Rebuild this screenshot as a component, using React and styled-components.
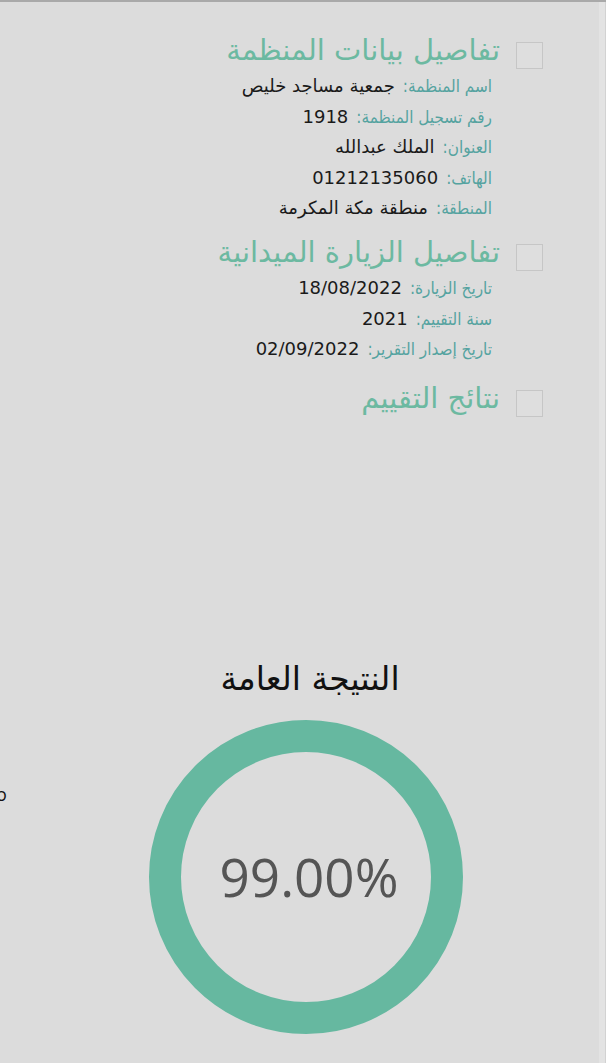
import React from 'react';
import styled, { createGlobalStyle } from 'styled-components';

const GlobalStyle = createGlobalStyle`
  html, body {
    margin: 0;
    padding: 0;
    background: #dcdcdc;
  }
  body {
    font-family: "DejaVu Sans", sans-serif;
  }
`;

const Page = styled.div`
  display: flex;
  width: 606px;
  height: 1063px;
  border-top: 2px solid #a9a9a9;
  box-sizing: border-box;
  overflow: hidden;
  position: relative;
`;

const Main = styled.div`
  flex: 1;
  direction: rtl;
  display: flex;
  flex-direction: column;
`;

const Rail = styled.div`
  width: 6px;
  background: #e3e3e3;
  border-right: 1px solid #d2d2d2;
`;

const Sections = styled.div`
  display: flex;
  flex-direction: column;
  padding: 26px 56px 0 0;
`;

const Section = styled.div`
  display: flex;
  align-items: flex-start;
  gap: 16px;
  margin-top: ${p => (p.$first ? 0 : p.$spaced ? '7px' : '2px')};
`;

const Check = styled.div`
  width: 25px;
  height: 25px;
  margin-top: 14px;
  border: 1px solid #c6c6c6;
  background: #dedede;
  flex-shrink: 0;
`;

const Body = styled.div`
  display: flex;
  flex-direction: column;
`;

const Heading = styled.h2`
  margin: 0;
  font-family: "DejaVu Sans", sans-serif;
  font-weight: 400;
  font-size: 29px;
  line-height: 44px;
  color: #6cb9a1;
`;

const Rows = styled.div`
  display: flex;
  flex-direction: column;
  padding: 3px 8px 0 0;
`;

const Row = styled.div`
  display: flex;
  align-items: baseline;
  gap: 8px;
  height: 30.6px;
`;

const Label = styled.span`
  font-family: "DejaVu Sans Condensed", "DejaVu Sans", sans-serif;
  font-size: 17px;
  color: #55a3a0;
  letter-spacing: -0.3px;
`;

const Value = styled.span`
  font-family: "DejaVu Sans", sans-serif;
  font-size: 18px;
  color: #1a1a1a;
`;

const Result = styled.div`
  display: flex;
  flex-direction: column;
  align-items: center;
  margin-top: 239px;
  padding-left: 13px;
`;

const ResultTitle = styled.div`
  font-family: "DejaVu Sans", sans-serif;
  font-size: 33px;
  line-height: 40px;
  color: #111;
  margin-bottom: 21px;
  padding-left: 8px;
`;

const Ring = styled.div`
  position: relative;
  width: 314px;
  height: 314px;
  display: flex;
  align-items: center;
  justify-content: center;
`;

const RingSvg = styled.svg`
  position: absolute;
  inset: 0;
`;

const Percent = styled.div`
  position: relative;
  direction: ltr;
  font-family: "Open Sans", sans-serif;
  font-size: 53px;
  color: #555;
  padding-left: 6px;
`;

const Clipped = styled.div`
  position: absolute;
  left: -4px;
  top: 780px;
  font-family: "Open Sans", sans-serif;
  font-size: 18px;
  color: #111;
`;

const orgRows = [
  ['اسم المنظمة:', 'جمعية مساجد خليص'],
  ['رقم تسجيل المنظمة:', '1918'],
  ['العنوان:', 'الملك عبدالله'],
  ['الهاتف:', '01212135060'],
  ['المنطقة:', 'منطقة مكة المكرمة'],
];

const visitRows = [
  ['تاريخ الزيارة:', '18/08/2022'],
  ['سنة التقييم:', '2021'],
  ['تاريخ إصدار التقرير:', '02/09/2022'],
];

const DetailSection = ({ title, rows, first, spaced }) => (
  <Section $first={first} $spaced={spaced}>
    <Check />
    <Body>
      <Heading>{title}</Heading>
      {rows && (
        <Rows>
          {rows.map(([label, value]) => (
            <Row key={label}>
              <Label>{label}</Label>
              <Value>{value}</Value>
            </Row>
          ))}
        </Rows>
      )}
    </Body>
  </Section>
);

export default function App() {
  const size = 314;
  const stroke = 32;
  const r = (size - stroke) / 2;

  return (
    <>
      <GlobalStyle />
      <Page>
        <Main>
          <Sections>
            <DetailSection first title="تفاصيل بيانات المنظمة" rows={orgRows} />
            <DetailSection title="تفاصيل الزيارة الميدانية" rows={visitRows} />
            <DetailSection spaced title="نتائج التقييم" />
          </Sections>
          <Result>
            <ResultTitle>النتيجة العامة</ResultTitle>
            <Ring>
              <RingSvg width={size} height={size} viewBox={`0 0 ${size} ${size}`}>
                <circle cx={size / 2} cy={size / 2} r={r} fill="none" stroke="#66b8a0" strokeWidth={stroke} />
              </RingSvg>
              <Percent>99.00%</Percent>
            </Ring>
          </Result>
        </Main>
        <Rail />
        <Clipped>o</Clipped>
      </Page>
    </>
  );
}
